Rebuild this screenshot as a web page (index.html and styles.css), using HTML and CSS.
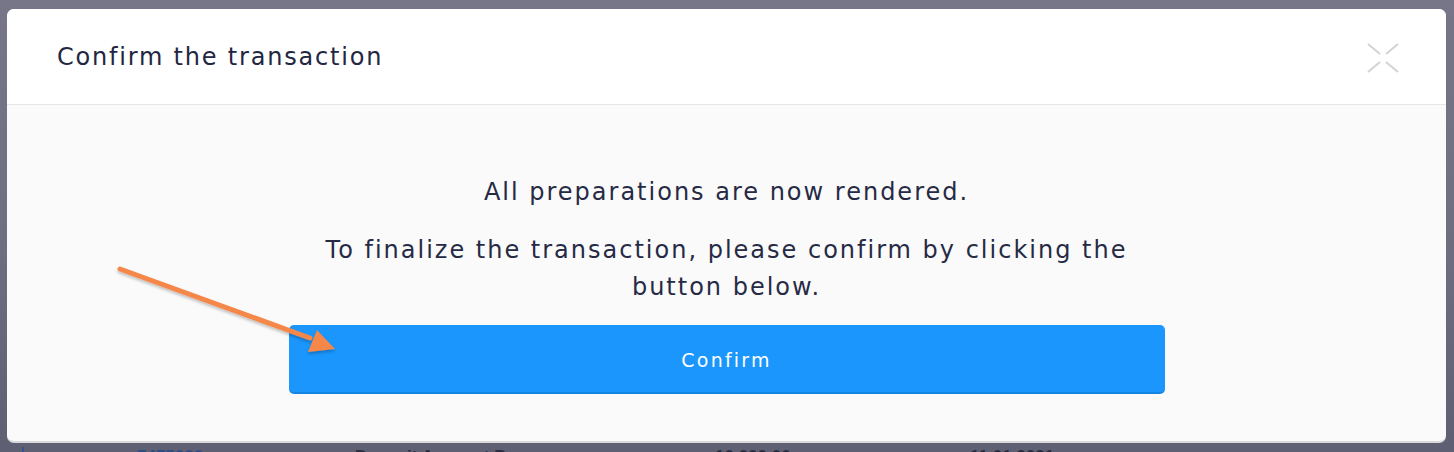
FILE: index.html
```html
<!DOCTYPE html>
<html>
<head>
<meta charset="utf-8">
<link rel="stylesheet" href="styles.css">
</head>
<body>
<div class="backdrop">
  <div class="behind-row">
    <span class="bar"></span>
    <span class="cell id">7475000</span>
    <span class="cell name">Deposit Account Prem</span>
    <span class="cell amount">10,000.00</span>
    <span class="cell date">11.01.2021</span>
  </div>
  <div class="modal">
    <div class="modal-header">
      <h2 class="modal-title">Confirm the transaction</h2>
      <svg class="close" width="32" height="30" viewBox="0 0 32 30">
        <path d="M1 1 L13 11 M31 1 L19 11 M1 29 L13 19 M31 29 L19 19" stroke="#d3d3d3" stroke-width="2" fill="none"/>
      </svg>
    </div>
    <div class="modal-body">
      <div class="content">
        <p class="msg">All preparations are now rendered.</p>
        <p class="msg second">To finalize the transaction, please confirm by clicking the button below.</p>
        <button class="confirm">Confirm</button>
      </div>
    </div>
  </div>
  <svg class="arrow" width="240" height="110" viewBox="0 0 240 110">
    <defs>
      <filter id="sh" x="-10%" y="-10%" width="130%" height="140%">
        <feDropShadow dx="0" dy="2" stdDeviation="1.5" flood-color="#000" flood-opacity="0.25"/>
      </filter>
    </defs>
    <g filter="url(#sh)">
      <line x1="10" y1="10" x2="200" y2="79" stroke="#f5874a" stroke-width="5" stroke-linecap="round"/>
      <polygon points="225,90 198,93 207,71" fill="#f5874a"/>
    </g>
  </svg>
</div>
</body>
</html>
```
FILE: styles.css
```css
html, body {
  margin: 0;
  padding: 0;
}
body {
  width: 1454px;
  height: 452px;
  overflow: hidden;
  font-family: "DejaVu Sans", "Open Sans", sans-serif;
}
.backdrop {
  position: relative;
  width: 1454px;
  height: 452px;
  background: linear-gradient(180deg, #777689 0%, #6f6f82 50%, #5f5f73 100%);
  padding-top: 9px;
  box-sizing: border-box;
  overflow: hidden;
}
.behind-row {
  position: absolute;
  left: 0;
  top: 447px;
  width: 1454px;
  height: 5px;
  overflow: hidden;
  font-family: "Liberation Sans", sans-serif;
  font-weight: bold;
  font-size: 17px;
  line-height: 20px;
  color: #2a2d40;
}
.behind-row .bar {
  position: absolute;
  left: 22px;
  top: 0;
  width: 2px;
  height: 20px;
  background: #36548a;
}
.behind-row .cell { position: absolute; top: 0; }
.behind-row .id { left: 137px; color: #2f4d85; }
.behind-row .name { left: 355px; }
.behind-row .amount { left: 715px; }
.behind-row .date { left: 970px; }

.modal {
  margin-left: 7px;
  width: 1439px;
  height: 434px;
  background: #fafafa;
  border-radius: 7px;
  border-bottom: 2px solid #d9d9dc;
  box-sizing: border-box;
  overflow: hidden;
  display: flex;
  flex-direction: column;
}
.modal-header {
  height: 96px;
  flex: none;
  background: #ffffff;
  border-bottom: 1px solid #e6e6e8;
  box-sizing: border-box;
  display: flex;
  align-items: center;
  justify-content: space-between;
  padding: 0 47px 0 50px;
}
.modal-title {
  margin: 0;
  font-weight: 400;
  font-size: 24px;
  letter-spacing: 1.8px;
  color: #23263f;
}
.close { display: block; margin-top: 2px; }
.modal-body {
  flex: 1;
  display: flex;
  justify-content: center;
}
.content {
  width: 876px;
  padding-top: 69px;
  text-align: center;
}
.msg {
  margin: 0;
  font-size: 24px;
  line-height: 37px;
  letter-spacing: 2px;
  color: #262a45;
}
.second { margin-top: 21px; padding: 0 30px; }
.confirm {
  display: block;
  width: 876px;
  height: 69px;
  margin-top: 19px;
  background: #1a96fc;
  border: none;
  border-bottom: 2px solid #1485e3;
  border-radius: 5px;
  color: #ffffff;
  font-family: "DejaVu Sans", sans-serif;
  font-size: 19px;
  letter-spacing: 2.2px;
  padding: 3px 0 0;
}
.arrow {
  position: absolute;
  left: 110px;
  top: 259px;
}
```
